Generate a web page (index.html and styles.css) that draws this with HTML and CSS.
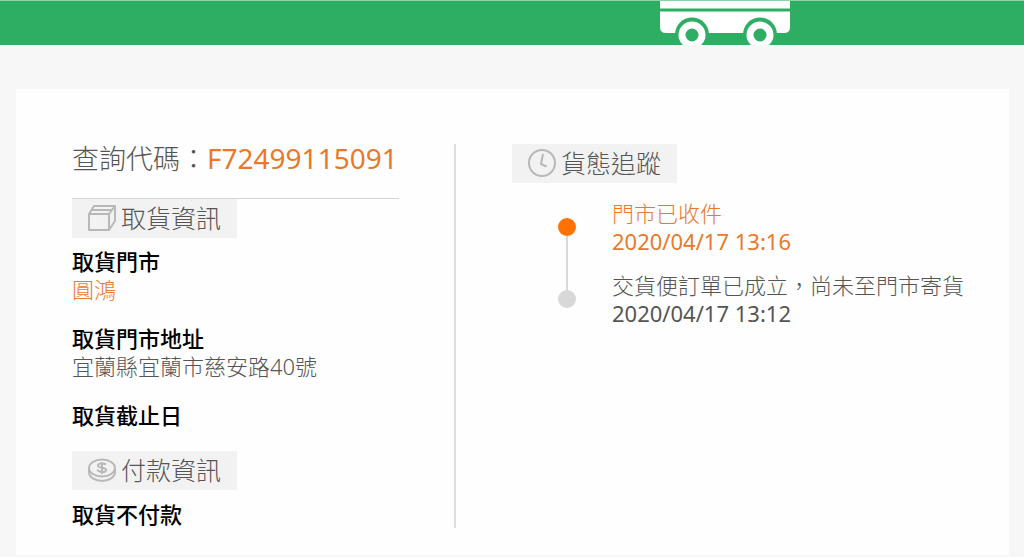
FILE: index.html
```html
<!DOCTYPE html>
<html lang="zh-Hant">
<head>
<meta charset="utf-8">
<meta name="viewport" content="width=device-width, initial-scale=1">
<title>貨態查詢</title>
<link rel="stylesheet" href="styles.css">
</head>
<body>
<header class="banner">
  <svg class="bus" viewBox="0 0 130 44" aria-hidden="true">
    <path fill="#fff" d="M0 0H130V26Q130 32 124 32H6Q0 32 0 26Z"/>
    <path fill="#2eae63" d="M0 7.500H130V10.500H0Z"/>
    <circle cx="32" cy="33.500" r="17" fill="#2eae63"/>
    <circle cx="100" cy="33.500" r="17" fill="#2eae63"/>
    <circle cx="32" cy="34" r="10" fill="none" stroke="#fff" stroke-width="7"/>
    <circle cx="100" cy="34" r="10" fill="none" stroke="#fff" stroke-width="7"/>
  </svg>
</header>
<main class="card">
  <section class="info">
    <h1 class="query">查詢代碼：<span class="code">F72499115091</span></h1>
    <h2 class="tag">
      <svg class="icon" viewBox="0 0 28 28" aria-hidden="true">
        <path d="M1 10H21V26H1ZM1 10 6 2H27L21 10M27 2V17L21 26M4 6H24"/>
      </svg>取貨資訊</h2>
    <dl class="fields">
      <div><dt>取貨門市</dt><dd class="accent">圓鴻</dd></div>
      <div><dt>取貨門市地址</dt><dd>宜蘭縣宜蘭市慈安路40號</dd></div>
      <div><dt>取貨截止日</dt></div>
    </dl>
    <h2 class="tag">
      <svg class="icon" viewBox="0 0 28 28" aria-hidden="true">
        <ellipse cx="14" cy="12" rx="13" ry="8.500"/>
        <path d="M1 12V16C1 21 7 25 14 25S27 21 27 16V12"/>
        <path d="M18 8.500C15 6.500 9 7.500 10 10S18 11 18 14 12 16.500 9 14M14 6V18" stroke-width="2"/>
      </svg>付款資訊</h2>
    <p class="payment">取貨不付款</p>
  </section>
  <section class="tracking">
    <h2 class="tag">
      <svg class="icon" viewBox="0 0 28 28" aria-hidden="true">
        <circle cx="14" cy="14" r="13"/>
        <path d="M15 5 13 15 18.500 17.500"/>
      </svg>貨態追蹤</h2>
    <ol class="timeline">
      <li class="step current"><span>門市已收件</span><time datetime="2020-04-17T13:16">2020/04/17 13:16</time></li>
      <li class="step"><span>交貨便訂單已成立，尚未至門市寄貨</span><time datetime="2020-04-17T13:12">2020/04/17 13:12</time></li>
    </ol>
  </section>
</main>
</body>
</html>
```
FILE: styles.css
```css
* {
  box-sizing: border-box;
}

body {
  margin: 0;
  background: #f7f7f7;
  color: #555;
  font-family: "Noto Sans", "Noto Sans CJK TC", sans-serif;
  font-size: 22px;
  font-weight: 300;
  line-height: 28px;
}

h1, h2, p, dl, dd, ol {
  margin: 0;
  padding: 0;
  font-weight: 300;
}

.banner {
  height: 45px;
  padding-left: 64.5%;
  border-top: 1px solid #8fd3ab;
  background: #2eae63;
}

.bus {
  display: block;
  width: 130px;
  height: 44px;
}

.card {
  display: flex;
  margin: 44px 15px 0 16px;
  padding: 55px 40px 27px 56px;
  background: #fefefe;
}

.info {
  flex: 0 0 384px;
  padding-right: 55px;
  border-right: 2px solid #dedede;
}

.query {
  height: 55px;
  border-bottom: 1px solid #d4d4d4;
  font-size: 27px;
  white-space: nowrap;
}

.code,
.accent,
.current {
  color: #e8792b;
}

.code {
  font-size: 28px;
}

.code,
time {
  font-weight: 400;
}

.tag {
  display: flex;
  align-items: center;
  gap: 5px;
  width: max-content;
  height: 39px;
  padding: 0 16px 1px;
  background: #f2f2f2;
  font-size: 25px;
}

.icon {
  width: 28px;
  height: 28px;
  fill: none;
  stroke: #b8b8b8;
  stroke-width: 2;
  stroke-linejoin: round;
}

.fields {
  display: grid;
  gap: 21px;
  margin: 9px 0 22px;
}

dt,
.payment {
  color: #000;
  font-weight: 500;
}

.payment {
  margin-top: 10px;
}

.tracking {
  flex: 1;
  padding-left: 56px;
}

.timeline {
  display: grid;
  gap: 16px;
  margin: 16px 0 0 46px;
  list-style: none;
}

.step {
  position: relative;
  display: grid;
  padding-left: 54px;
}

.step::before {
  content: "";
  position: absolute;
  top: 19px;
  left: 0;
  z-index: 1;
  width: 18px;
  height: 18px;
  border-radius: 50%;
  background: #d8d8d8;
}

.current::before {
  background: #ff7200;
}

.current::after {
  content: "";
  position: absolute;
  top: 36px;
  left: 8px;
  width: 2px;
  height: 56px;
  background: #d8d8d8;
}
```
